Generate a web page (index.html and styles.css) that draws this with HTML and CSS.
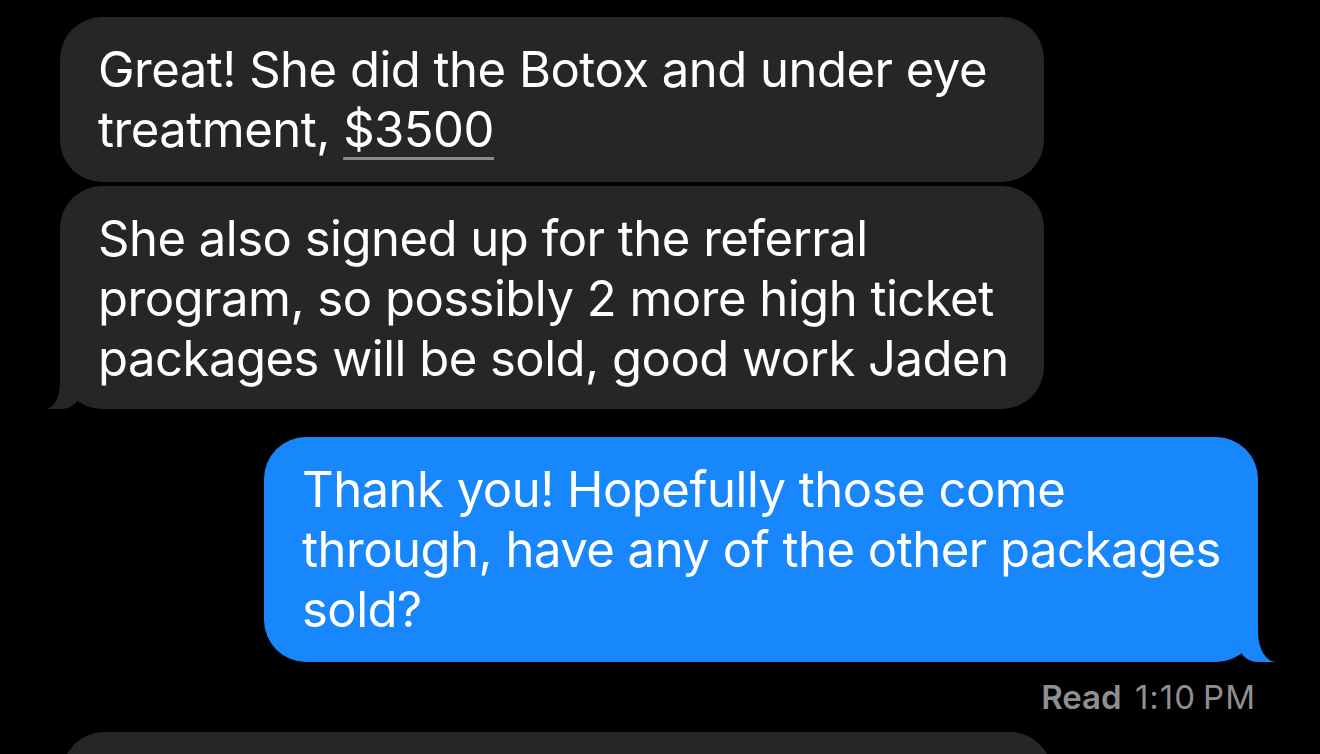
FILE: index.html
```html
<!DOCTYPE html>
<html lang="en">
<head>
    <meta charset="UTF-8">
    <meta name="viewport" content="width=device-width, initial-scale=1.0">
    <title>Messages</title>
    <link rel="stylesheet" href="styles.css">
</head>
<body>
    <div class="thread">
        <div class="bubble them">
            Great! She did the Botox and under eye treatment, <span class="link">$3500</span>
        </div>
        <div class="bubble them tail">
            She also signed up for the referral program, so possibly 2 more high ticket packages will be sold, good work Jaden
        </div>
        <div class="bubble me tail">
            Thank you! Hopefully those come through, have any of the other packages sold?
        </div>
        <div class="status"><b>Read</b> <span class="time">1:10&#8201;PM</span></div>
        <div class="bubble them next"></div>
    </div>
</body>
</html>
```

FILE: styles.css
```css
body {
    margin: 0;
    background-color: #000;
    font-family: Inter, "Noto Sans", sans-serif;
    overflow: hidden;
}

.thread {
    display: flex;
    flex-direction: column;
    padding: 17px 62px 0 60px;
}

.bubble {
    position: relative;
    box-sizing: border-box;
    padding: 23px 30px 22px 38px;
    border-radius: 42px;
    font-size: 49px;
    line-height: 60px;
    letter-spacing: -0.5px;
    color: #fff;
}

.them {
    align-self: flex-start;
    width: 984px;
    background-color: #262629;
}

.them + .them {
    margin-top: 4px;
}

.them.tail {
    padding-bottom: 20px;
}

.me {
    align-self: flex-end;
    width: 994px;
    margin-top: 28px;
    background-color: #1787fb;
}

.link {
    text-decoration: underline;
    text-decoration-color: #8a8a8e;
    text-decoration-thickness: 3px;
    text-underline-offset: 10px;
}

/* bubble tails */
.them.tail::before {
    content: "";
    position: absolute;
    bottom: 0;
    left: -15px;
    width: 36px;
    height: 50px;
    background-color: #262629;
    border-bottom-right-radius: 20px;
}

.them.tail::after {
    content: "";
    position: absolute;
    bottom: 0;
    left: -30px;
    width: 30px;
    height: 50px;
    background-color: #000;
    border-bottom-right-radius: 15px 26px;
}

.me.tail::before {
    content: "";
    position: absolute;
    bottom: 0;
    right: -18px;
    width: 38px;
    height: 50px;
    background-color: #1787fb;
    border-bottom-left-radius: 20px;
}

.me.tail::after {
    content: "";
    position: absolute;
    bottom: 0;
    right: -34px;
    width: 34px;
    height: 50px;
    background-color: #000;
    border-bottom-left-radius: 18px 30px;
}

.status {
    align-self: flex-end;
    margin-top: 15px;
    margin-right: 2px;
    font-size: 33px;
    line-height: 40px;
    color: #8e8e93;
}

.status b {
    font-weight: 600;
    margin-right: 4px;
}

.time {
    letter-spacing: 1px;
}

.next {
    height: 120px;
    margin-top: 15px;
    margin-left: 2px;
    width: 990px;
}
```
